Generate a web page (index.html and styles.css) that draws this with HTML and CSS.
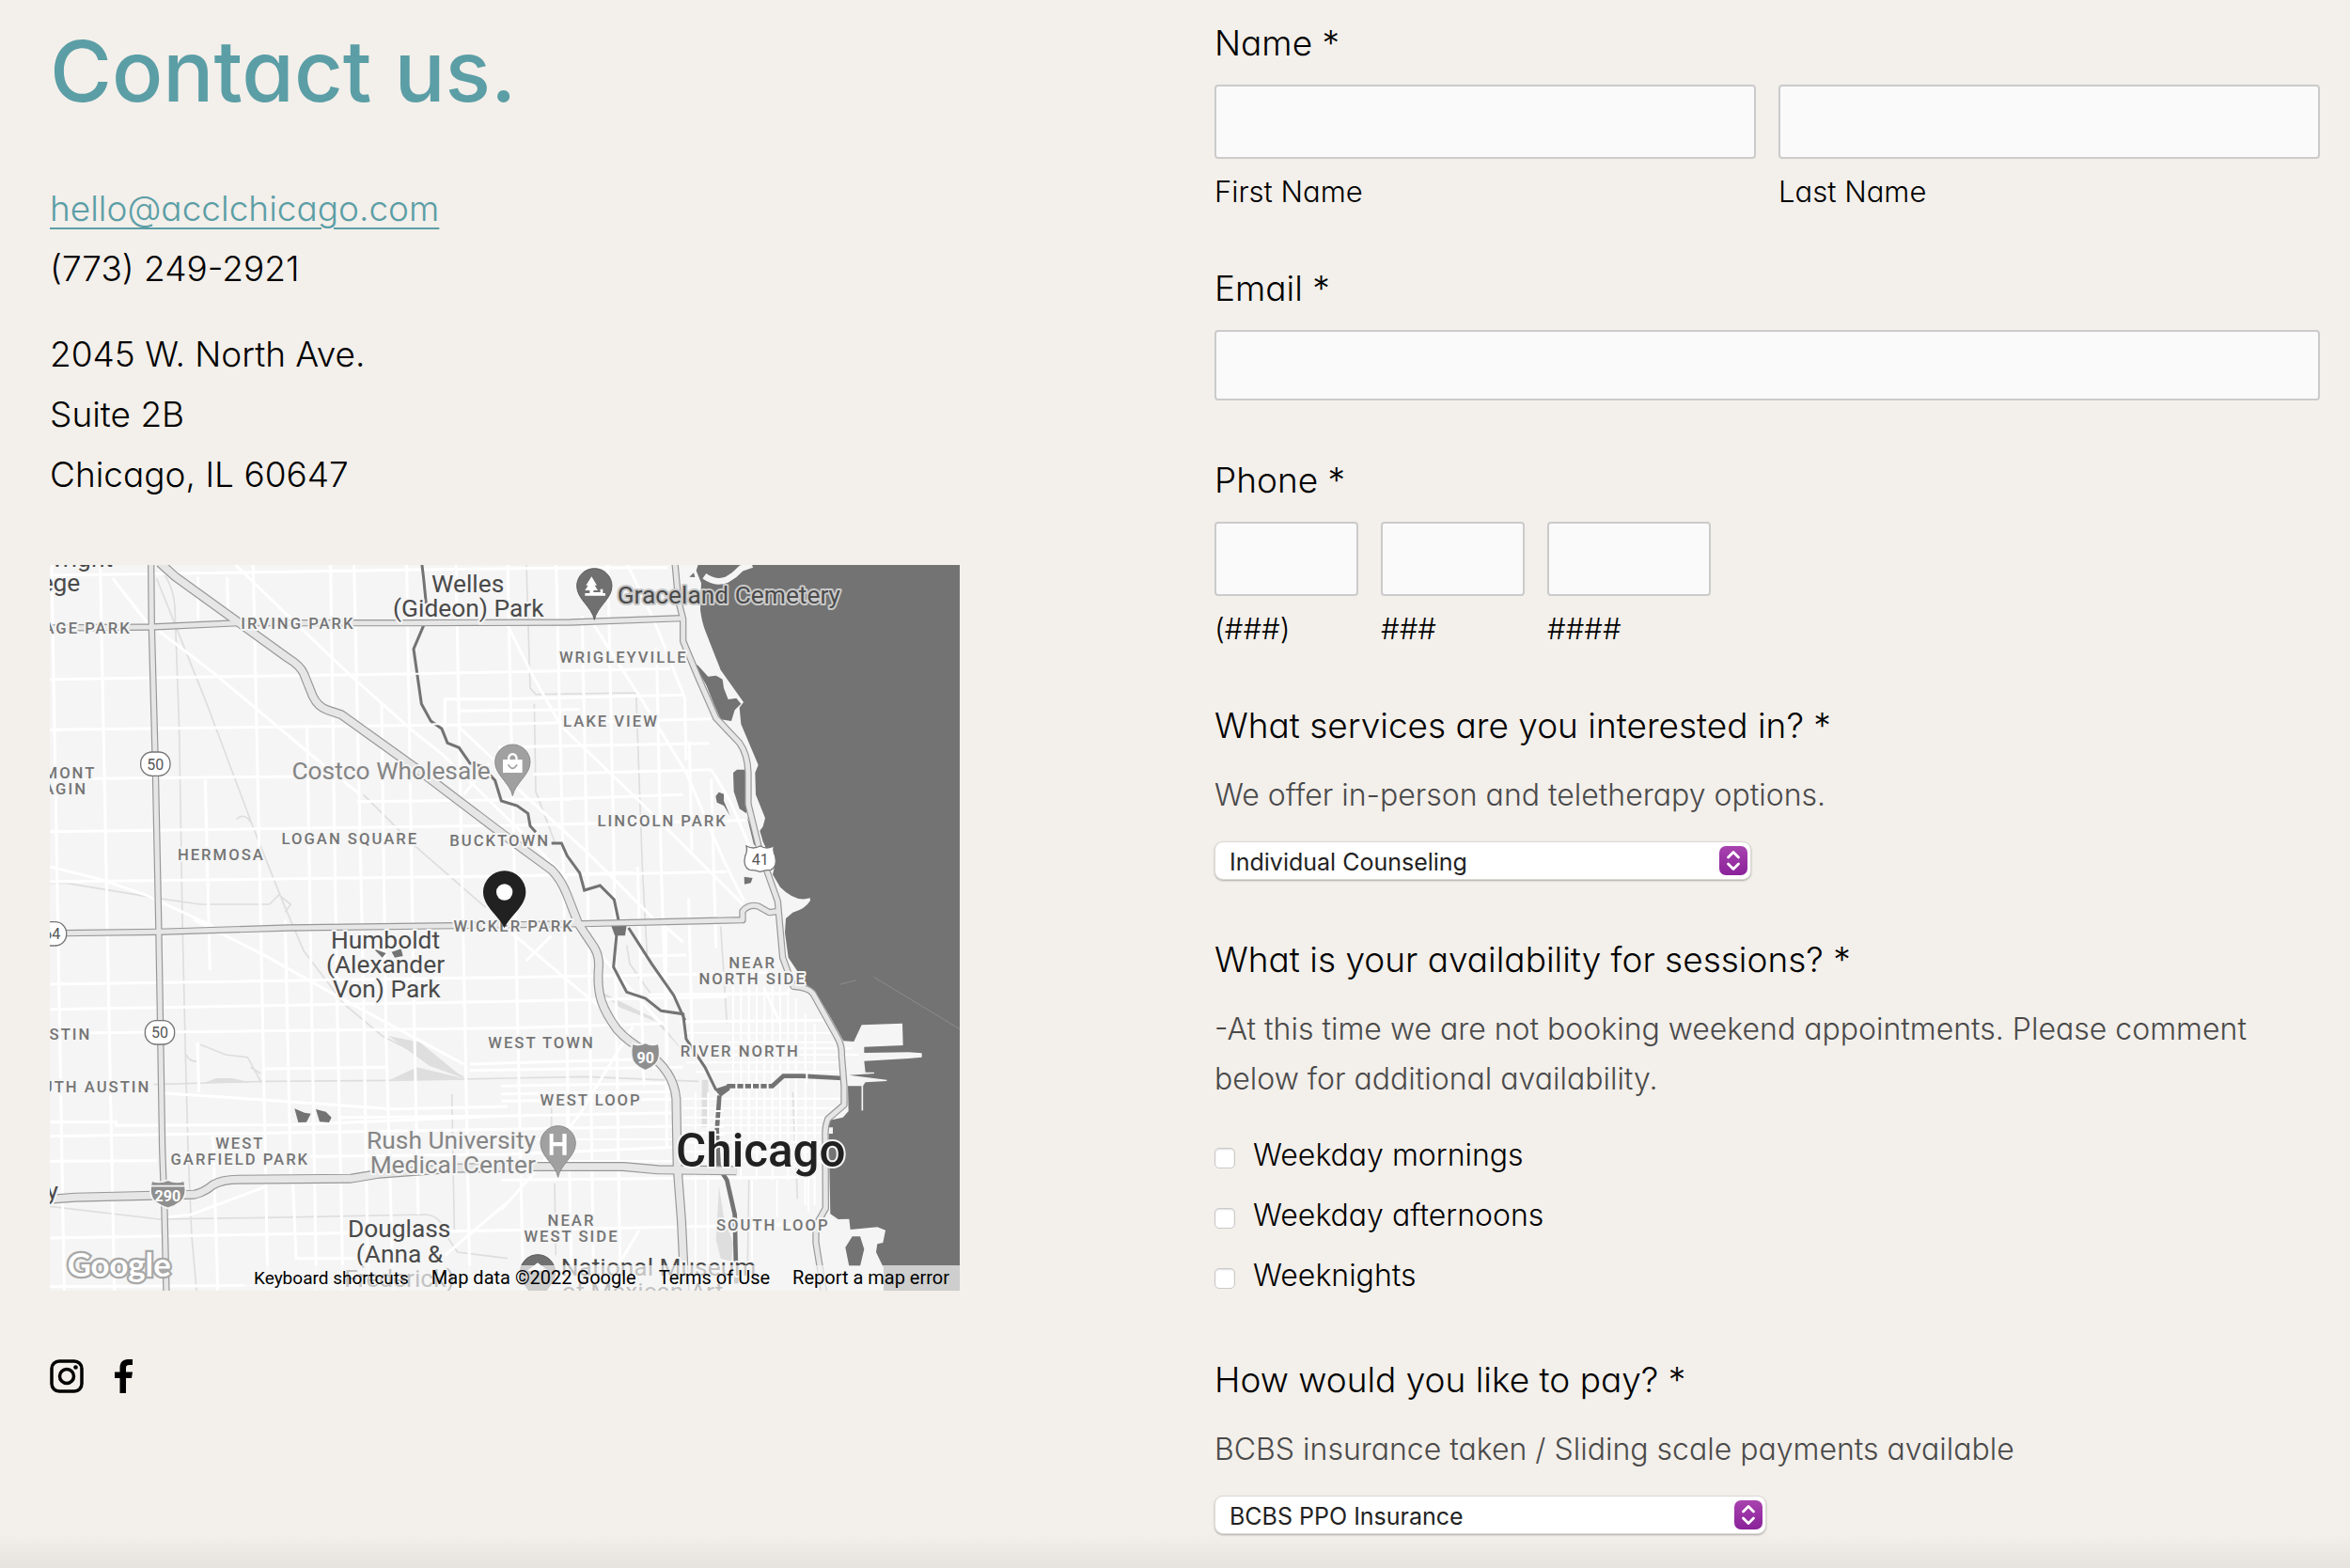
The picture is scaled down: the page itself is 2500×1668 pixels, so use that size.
FILE: index.html
```html
<!DOCTYPE html>
<html lang="en">
<head>
<meta charset="utf-8">
<meta name="viewport" content="width=device-width, initial-scale=1">
<title>Contact us</title>
<link rel="stylesheet" href="styles.css">
</head>
<body>
<main class="page">
  <section class="contact">
    <h1 class="title">Contact us.</h1>
    <div class="details">
      <p><a class="mail" href="mailto:hello@acclchicago.com">hello@acclchicago.com</a><br>(773) 249-2921</p>
      <p>2045 W. North Ave.<br>Suite 2B<br>Chicago, IL 60647</p>
    </div>

    <div class="map">
      <svg class="map-art" viewBox="39 37 2904 2316" role="img" aria-label="Map of Chicago">
        <defs>
          <path id="pin" d="M0 164C-8 122-56 98-56 56A56 56 0 0 1 56 56C56 98 8 122 0 164Z"/>
          <path id="interstate" d="M-52 2Q-26 12 0 0Q26 12 52 2Q64 50 40 70Q22 84 0 90Q-22 84-40 70Q-64 50-52 2Z"/>
          <path id="kennedy" d="M390 30L440 75L630 212L800 335Q838 358 850 385L878 455Q895 490 925 500L970 515L1200 680L1490 900L1640 1010Q1670 1040 1690 1090L1725 1180L1778 1260Q1795 1290 1790 1330C1785 1410 1802 1455 1850 1520Q1880 1555 1940 1590Q2030 1650 2038 1740L2042 1960L2055 2130L2066 2360"/>
          <path id="cicero" d="M362 30L364 235L375 640L386 1170L390 1400L398 1900L405 2100L411 2360"/>
          <path id="irving" d="M30 238L364 235L640 222L1180 222L1700 220L2055 207"/>
          <path id="north" d="M80 1212L386 1208L800 1195L1330 1188L1740 1182L2250 1170V1142Q2270 1118 2300 1126L2335 1146L2365 1142"/>
          <path id="shore" d="M2034 30L2045 150L2060 210V280L2110 400L2165 525L2240 605Q2266 640 2268 700V800L2300 930L2330 1020L2362 1110L2370 1200L2378 1290L2412 1382Q2460 1385 2475 1405L2550 1540Q2568 1570 2566 1600L2574 1700V1760L2522 1805Q2512 1830 2514 1860L2515 2090L2484 2145V2200L2510 2360"/>
          <path id="ike" d="M30 2062L120 2055L500 2046Q530 2040 560 2015Q590 1998 640 1998L1000 1995L1090 1980L1330 1962L1600 1957L1870 1957L1980 1967L2230 1970"/>
        </defs>
        <rect class="land" x="30" y="30" width="2920" height="2330"/>

        <g class="rail">
          <path d="M400 60Q435 110 438 170L452 560L462 1170L472 1600L480 1900L492 2180L508 2360M380 80L540 480L690 880L790 1130L850 1270L980 1440L1100 1540L1360 1672M30 1052H90L380 1100L520 1120H740M370 1695L720 1685L1120 1682L1500 1675L1750 1670L2110 1685M30 2083L390 2125L720 2120L1240 2110Q1290 2115 1300 2170L1340 2230L1500 2250M1040 770L1200 930L1430 1130M1560 37L1572 430L1590 450L1910 445L1930 1000L1945 1280M1585 480L1590 760L1650 920M1322 1725L1330 2160M1880 1250L1890 1310L1960 1410M2180 1190L2200 1500M2410 1720L2425 2060M2270 2000L2265 2340M475 1600Q480 1620 510 1622M520 1568L600 1600L670 1608L715 1690M1640 1770V1840M1650 2010L1654 2240M635 848Q660 825 682 860M740 1120L770 1090L808 1120L790 1145M680 1640L712 1660"/>
          <path d="M1120 1540L1220 1560L1360 1675L1250 1635ZM1125 1680L1210 1640L1360 1676ZM2175 2020L2190 2120L2220 2200L2215 2260L2180 2250L2165 2190ZM2120 1680V1830H2140V1680ZM1780 1390L1860 1450L1990 1500L2070 1600L1960 1480ZM530 1690L570 1675H620L680 1688Z" class="yard"/>
        </g>

        <g class="street">
          <path d="M45 37L85 2352M200 37L245 2352M512 75V210M605 75L608 200M688 37L712 1170L735 2352M535 720L550 1330M860 550L872 1290L890 2352M935 37L955 1400L975 2352M1010 37L1040 1400L1055 2352M1098 480L1112 1540L1135 2352M1178 37L1200 1400L1215 2110M1335 37L1362 1400L1380 2352M1500 37L1530 1400L1550 2352M1655 37L1680 1100L1705 2352M1738 200L1760 1300L1775 2352M1820 37L1838 900L1860 2352M1975 300L1990 1000L2010 1600M2080 600L2088 950M2150 720L2165 1260M1915 1000L1935 1700M2005 1200L2008 1900M2078 1100L2090 1600M790 1170L808 2000M560 1860L575 2352M510 1560L515 1720M815 2010L825 2250"/>
          <path d="M40 70L700 60L1500 48L2010 45M40 402L1210 384L2020 368M40 563L1500 545L2150 528M40 720L830 712M40 888L1500 868L2260 852M40 1048L1500 1030L2200 1016M40 1375L1500 1353L2340 1338M40 1455L1500 1430L2200 1415M40 1532L1500 1515L2000 1500M40 1815L250 1815V1826L800 1824L1500 1795L2040 1785M40 1860L1500 1838L2040 1828M40 1940L380 1938M870 1925L1500 1918L2040 1895M40 2185L1500 2160L2500 2140M40 2340L1500 2332M1470 465L2060 452M1345 503L1730 498M1470 618L2145 606M1580 705L2150 690M1580 786L2060 770M1020 792L1700 785M1690 1025L1900 1018M1920 1285L2070 1282M400 1722L880 1755L1130 1773L1500 1765M725 1645L1120 1640M1380 1630L1900 1615M1380 1650L2060 1640M960 1800L1500 1795M1480 2000L2480 1990M1950 1408L2400 1405M2050 1495L2540 1490"/>
          <path d="M240 80L345 215L560 380L870 640L1030 770M625 30L800 200L1010 400L1190 560L1290 640L1560 905L1690 1040M1500 230L1580 390L1670 550L1920 790L2160 1030L2250 1120M1770 220L1930 470L2070 700L2190 980L2255 1110M1880 30L1970 220L2065 460L2070 660M500 1170L720 1280L950 1410L1360 1630M1500 2070L1300 2240M1480 2095L1600 1960L1730 1790L1900 1510M400 2120L490 2110L730 2020M345 1090L560 1190M40 1000L200 1040L345 1090M1340 550L1500 700M1300 560V465H1500M1440 670L1360 770M1520 740L1760 960L1910 1110L1980 1180M1500 1200L1700 1370L1860 1500M1990 1180L2060 1240M1560 1300L1640 1220M820 2250H1130M1480 1700L2040 1690M1480 1725L2040 1718M1480 1748L2040 1742M2150 690L2210 790L2270 930M1860 2260L1920 2160M2320 1390L2370 1500M1740 1215L1900 1400L1990 1500"/>
        </g>
        <g class="street downtown">
          <path d="M2220 1380V1960M2245 1380V2000M2270 1380V1960M2295 1380V2000M2320 1380V1960M2345 1380V2000M2370 1380V1960M2395 1390V2000M2420 1420V1960M2450 1470V2080M2480 1500V2080M2100 1720V2300M2140 1720V2340M2280 2000V2330M2360 2000V2120M2460 1990V2100"/>
          <path d="M2070 1530H2540M2200 1560H2560M2070 1580H2600M2200 1600H2620M2070 1625H2560M2100 1655H2560M2060 1740H2570M2060 1770H2570M2060 1800H2540M2060 1825H2510M2060 1850H2510M2060 1880H2510M2060 1910H2510M2060 1940H2510M1690 1720V1960M1520 1870H2030M1520 1940H2030"/>
        </g>

        <path class="water" d="M2110 30L2102 55L2118 95L2115 180Q2120 220 2132 250L2180 372L2253 475L2240 492L2245 545L2300 675L2290 700L2292 770L2322 845L2315 872L2305 885L2315 920L2352 1000L2346 1025L2370 1065Q2420 1115 2465 1100L2466 1108Q2450 1135 2410 1146L2388 1165L2385 1210L2396 1290L2455 1378L2480 1395L2530 1480L2572 1556L2605 1558L2630 1505L2760 1500L2762 1570L2638 1575V1594L2780 1592L2822 1595V1608L2780 1612L2638 1620L2642 1656H2670V1660L2590 1665L2710 1680V1684L2642 1688L2634 1700H2586L2588 1780L2570 1800L2525 1810V1832H2538V1852H2525L2530 2108L2555 2125L2590 2124L2594 2158L2680 2150L2706 2160L2698 2200L2680 2204L2676 2230L2700 2280V2360H2950V30Z"/>
        <g class="water">
          <path d="M2105 355L2140 393L2165 390L2186 402L2190 430L2204 466L2230 462L2245 480L2225 500L2214 535L2180 530L2158 480L2134 420L2100 362ZM2220 700L2232 690H2262V830L2240 815L2222 760ZM2164 775L2174 762L2190 768L2190 790L2210 838L2190 805L2168 795ZM2255 1032L2282 1036L2276 1052L2256 1056ZM2264 840L2300 930L2286 930ZM2080 75L2094 62L2098 76ZM2600 2180H2625L2638 2220L2625 2275H2590L2578 2215Z"/>
          <path d="M820 1772L852 1785L872 1788L858 1815L832 1816ZM888 1774L920 1782L938 1800L930 1816L900 1814ZM1130 1272L1160 1262L1166 1285L1140 1290ZM1072 1262L1112 1276L1100 1290ZM1830 1186H1880L1875 1220H1842ZM2160 1710L2205 1695L2210 1712L2180 1734Z"/>
        </g>
        <g class="spit">
          <path d="M2128 72Q2165 98 2200 84Q2225 70 2245 48L2280 36"/>
          <path d="M2632 1690V1778" class="thin"/><path d="M2668 1352L2943 1518M2560 1376L2612 1362" class="hair"/>
        </g>
        <g class="river">
          <path d="M1226 30L1232 80L1240 160M1232 230L1200 305L1225 480L1255 535L1290 560L1308 605L1345 620L1380 670L1420 680L1460 725L1480 790L1530 805L1565 830L1572 870L1590 890M1640 925L1672 925L1690 965L1730 1020L1745 1075L1795 1060L1840 1105L1858 1190"/>
          <path d="M1848 1215L1838 1320L1880 1400L1940 1420L1990 1460L2060 1470L2070 1550L2130 1640L2165 1712M1886 1195L1960 1310L2030 1410L2066 1490"/>
          <path d="M2200 1700H2345L2380 1668H2440L2570 1675M2176 1730L2168 1840L2174 1960L2200 2000L2225 2110L2230 2330" class="wide"/>
        </g>
        <path class="bridges" d="M2230 1690V1712M2255 1690V1712M2280 1690V1712M2305 1690V1712M2330 1690V1712M2455 1650V1690M2160 1780H2190M2160 1805H2190M2160 1830H2190M2160 1855H2190M2160 1880H2190M1205 384H1222M1260 545H1300"/>

        <g class="casing">
          <use href="#irving"/><use href="#north"/><use href="#cicero"/><use href="#shore"/><use href="#ike" class="major"/><use href="#kennedy" class="major"/>
        </g>
        <g class="road">
          <use href="#irving"/><use href="#north"/><use href="#cicero"/><use href="#shore"/><use href="#ike" class="major"/><use href="#kennedy" class="major"/>
        </g>

        <g class="shield">
          <rect x="329" y="634" width="94" height="76" rx="36"/><text x="376" y="690">50</text>
          <rect x="343" y="1491" width="94" height="76" rx="36"/><text x="390" y="1546">50</text>
          <rect x="-4" y="1176" width="96" height="76" rx="36"/><text x="46" y="1231">64</text>
          <path d="M2262 934Q2284 946 2306 934Q2328 946 2350 934Q2346 950 2354 966Q2362 1000 2340 1010Q2322 1010 2306 1016Q2290 1010 2272 1010Q2250 1000 2258 966Q2266 950 2262 934Z"/><text x="2306" y="993">41</text>
        </g>
        <g class="interstate">
          <use href="#interstate" x="416" y="2000"/><path d="M360 2019H472M1890 1578H1990"/><text x="415" y="2069">290</text>
          <use href="#interstate" transform="translate(1940 1562) scale(.8 .98)"/><text x="1940" y="1628">90</text>
        </g>

        <g class="hood">
          <text x="299" y="257" text-anchor="end">PORTAGE PARK</text>
          <text x="831" y="241">IRVING PARK</text>
          <text x="1870" y="348">WRIGLEYVILLE</text>
          <text x="1830" y="553">LAKE VIEW</text>
          <text x="1994" y="872">LINCOLN PARK</text>
          <text x="1475" y="935">BUCKTOWN</text>
          <text x="997" y="927">LOGAN SQUARE</text>
          <text x="586" y="980">HERMOSA</text>
          <text x="187" y="717" text-anchor="end">BELMONT</text>
          <text x="159" y="770" text-anchor="end">CRAGIN</text>
          <text x="1520" y="1208">WICKER PARK</text>
          <text x="172" y="1552" text-anchor="end">AUSTIN</text>
          <text x="361" y="1720" text-anchor="end">SOUTH AUSTIN</text>
          <text x="646" y="1900">WEST</text><text x="646" y="1952">GARFIELD PARK</text>
          <text x="1608" y="1580">WEST TOWN</text>
          <text x="2242" y="1605">RIVER NORTH</text>
          <text x="1766" y="1762">WEST LOOP</text>
          <text x="2282" y="1325">NEAR</text><text x="2282" y="1376">NORTH SIDE</text>
          <text x="1704" y="2146">NEAR</text><text x="1704" y="2197">WEST SIDE</text>
          <text x="2347" y="2161">SOUTH LOOP</text>
        </g>
        <g class="place">
          <text x="240" y="43" text-anchor="end">Wright</text>
          <text x="136" y="122" text-anchor="end">College</text>
          <text x="1373" y="125">Welles</text><text x="1375" y="203">(Gideon) Park</text>
          <text x="1850" y="160" text-anchor="start" class="over-water">Graceland Cemetery</text>
          <text x="1110" y="1260">Humboldt</text><text x="1110" y="1338">(Alexander</text><text x="1114" y="1416">Von) Park</text>
          <text x="1154" y="2182">Douglass</text><text x="1155" y="2262">(Anna &amp;</text><text x="1155" y="2342">Frederick)</text>
          <text x="66" y="2062" text-anchor="end">y</text>
          <text x="1670" y="2305" text-anchor="start">National Museum</text>
          <text x="1673" y="2383" text-anchor="start">of Mexican Art</text>
        </g>
        <g class="place business">
          <text x="1445" y="722" text-anchor="end">Costco Wholesale</text>
          <text x="1590" y="1900" text-anchor="end">Rush University</text>
          <text x="1590" y="1978" text-anchor="end">Medical Center</text>
        </g>
        <text class="city" x="2308" y="1957">Chicago</text>

        <g class="poi">
          <use href="#pin" x="1777" y="48" class="dark"/>
          <path class="glyph" d="M1768 74L1750 102H1757L1747 118H1762V127H1747V135H1812V127H1804V114H1796V124H1774V118H1788L1778 102H1785Z"/>
          <use href="#pin" x="1516" y="610"/>
          <path class="glyph" d="M1485 658H1500V652Q1502 638 1516 637Q1530 638 1532 652V658H1547V700H1485ZM1507 658H1525V652Q1523 644 1516 644Q1509 644 1507 652Z" fill-rule="evenodd"/>
          <path class="smile" d="M1502 674Q1516 698 1530 674"/>
          <use href="#pin" x="1661" y="1827"/>
          <path class="glyph" d="M1634 1852H1646V1879H1675V1852H1688V1920H1675V1892H1646V1920H1634Z"/>
          <use href="#pin" x="1596" y="2238" class="dark"/>
          <path class="glyph" d="M1596 2264L1630 2290H1562Z"/>
        </g>
        <path class="marker" d="M1490 1196C1476 1160 1422 1128 1422 1081A68 68 0 0 1 1558 1081C1558 1128 1504 1160 1490 1196Z"/>
        <circle cx="1490" cy="1081" r="26" fill="#fff"/>
        <text class="logo" x="95" y="2307">Google</text>
      </svg>
      <div class="map-bar">
        <button class="keys" type="button">Keyboard shortcuts</button>
        <span>Map data ©2022 Google</span>
        <a href="#terms">Terms of Use</a>
        <a href="#report">Report a map error</a>
      </div>
    </div>

    <nav class="social" aria-label="Social media">
      <a href="#instagram" aria-label="Instagram">
        <svg width="36" height="36" viewBox="0 0 36 36"><rect x="2" y="2" width="32" height="32" rx="8" fill="none" stroke="#000" stroke-width="3.500"/><circle cx="18" cy="18" r="7.500" fill="none" stroke="#000" stroke-width="3.500"/><circle cx="27.500" cy="8.500" r="2.300"/></svg>
      </a>
      <a href="#facebook" aria-label="Facebook">
        <svg width="19" height="36" viewBox="0 0 19 36"><path d="M5.500 36V20H0V13.500H5.500V9.500C5.500 3.500 8.500 0 14 0H19V6H15.500C13 6 12 7 12 9V13.500H19L18 20H12V36Z"/></svg>
      </a>
    </nav>
  </section>

  <form class="form">
    <fieldset class="field">
      <legend class="label">Name *</legend>
      <div class="names">
        <div class="part"><input class="box" type="text" id="first"><label class="caption" for="first">First Name</label></div>
        <div class="part"><input class="box" type="text" id="last"><label class="caption" for="last">Last Name</label></div>
      </div>
    </fieldset>
    <div class="field">
      <label class="label" for="email">Email *</label>
      <input class="box email" type="email" id="email">
    </div>
    <fieldset class="field">
      <legend class="label">Phone *</legend>
      <div class="phones">
        <div class="part area"><input class="box" type="tel" id="area"><label class="caption" for="area">(###)</label></div>
        <div class="part area"><input class="box" type="tel" id="prefix"><label class="caption" for="prefix">###</label></div>
        <div class="part line"><input class="box" type="tel" id="line"><label class="caption" for="line">####</label></div>
      </div>
    </fieldset>
    <div class="field">
      <label class="label" for="service">What services are you interested in? *</label>
      <p class="hint">We offer in-person and teletherapy options.</p>
      <div class="picker">
        <select id="service"><option>Individual Counseling</option></select>
        <svg class="stepper" width="30" height="31" viewBox="0 0 30 31"><rect width="30" height="31" rx="7" fill="url(#purple)"/><defs><linearGradient id="purple" x2="0" y2="1"><stop stop-color="#a843ae"/><stop offset="1" stop-color="#8a219a"/></linearGradient></defs><path d="M9.500 12L15 6.500L20.500 12M9.500 19L15 24.500L20.500 19" fill="none" stroke="#fff" stroke-width="2.800" stroke-linecap="round" stroke-linejoin="round"/></svg>
      </div>
    </div>
    <fieldset class="field">
      <legend class="label">What is your availability for sessions? *</legend>
      <p class="hint">-At this time we are not booking weekend appointments. Please comment below for additional availability.</p>
      <div class="options">
        <label class="option"><input type="checkbox">Weekday mornings</label>
        <label class="option"><input type="checkbox">Weekday afternoons</label>
        <label class="option"><input type="checkbox">Weeknights</label>
      </div>
    </fieldset>
    <div class="field">
      <label class="label" for="payment">How would you like to pay? *</label>
      <p class="hint">BCBS insurance taken / Sliding scale payments available</p>
      <div class="picker payment">
        <select id="payment"><option>BCBS PPO Insurance</option></select>
        <svg class="stepper" width="30" height="31" viewBox="0 0 30 31"><rect width="30" height="31" rx="7" fill="url(#purple)"/><path d="M9.500 12L15 6.500L20.500 12M9.500 19L15 24.500L20.500 19" fill="none" stroke="#fff" stroke-width="2.800" stroke-linecap="round" stroke-linejoin="round"/></svg>
      </div>
    </div>
  </form>
</main>
</body>
</html>
```
FILE: styles.css
```css
* { box-sizing: border-box; }

body {
  margin: 0;
  min-height: 100vh;
  background: linear-gradient(#f3efea, #e6e2dd) bottom / 100% 36px no-repeat #f3efea;
  color: #000;
  font-family: Inter, "Liberation Sans", sans-serif;
  font-feature-settings: "cv11";
  font-size: 37px;
  font-weight: 300;
  line-height: 64px;
}

p, h1 { margin: 0; }

.page {
  display: grid;
  grid-template-columns: 968fr 1176fr;
  column-gap: 271px;
  padding: 14px 32px 32px 53px;
}

/* Contact details */
.contact { padding-top: 8px; }
.title {
  color: #5b9ea6;
  font-size: 90px;
  font-weight: 500;
  line-height: 108px;
}
.details {
  display: grid;
  gap: 27px;
  margin-top: 60px;
}
.mail {
  color: #5b9ea6;
  text-decoration-thickness: 2px;
  text-underline-offset: 7px;
}

/* Map */
.map {
  position: relative;
  margin-top: 64px;
  font-family: Roboto, sans-serif;
  font-weight: 400;
}
.map-art { display: block; width: 100%; height: auto; }
.land { fill: #f5f5f5; }
.rail { fill: none; stroke: #dedede; stroke-width: 5; }
.yard { fill: #dedede; stroke: none; }
.street { fill: none; stroke: #fff; stroke-width: 9; }
.downtown { stroke-width: 6; }
.water { fill: #737373; }
.spit { fill: none; stroke: #f5f5f5; stroke-width: 20; }
.thin { stroke-width: 5; }
.hair { stroke: #999; stroke-width: 2; }
.river { fill: none; stroke: #737373; stroke-width: 9; }
.wide { stroke-width: 14; }
.bridges { fill: none; stroke: #fff; stroke-width: 6; }
.casing, .road { fill: none; stroke-linejoin: round; }
.casing { stroke: #979797; stroke-width: 22; }
.road { stroke: #e6e6e6; stroke-width: 15; }
.casing .major { stroke-width: 30; }
.road .major { stroke-width: 23; }
.shield { fill: #fff; stroke: #757575; stroke-width: 4; }
.shield text { fill: #555; stroke: none; font-size: 48px; text-anchor: middle; }
.interstate { fill: #8f8f8f; stroke: #f5f5f5; stroke-width: 5; }
.interstate text { fill: #fff; stroke: none; font-size: 48px; font-weight: 700; text-anchor: middle; }
.hood, .place, .city { paint-order: stroke; stroke: #f5f5f5; stroke-width: 12; stroke-linejoin: round; }
.hood { fill: #757575; font-size: 50px; font-weight: 500; letter-spacing: 6px; text-anchor: middle; }
.place { fill: #4a4a4a; font-size: 79px; text-anchor: middle; }
.over-water { stroke: #c9c9c9; }
.business { fill: #858585; }
.city { fill: #212121; font-size: 148px; font-weight: 500; text-anchor: middle; }
.poi { fill: #a0a0a0; stroke: #8c8c8c; stroke-width: 3; }
.poi .dark { fill: #707070; stroke: #5c5c5c; }
.poi .glyph { fill: #fff; stroke: none; }
.smile { fill: none; stroke: #a0a0a0; stroke-width: 5; }
.marker { fill: #212121; }
.logo {
  paint-order: stroke;
  fill: #fff;
  stroke: #a8a8a8;
  stroke-width: 14;
  font-family: Lato, sans-serif;
  font-size: 104px;
  font-weight: 700;
}
.map-bar {
  position: absolute;
  right: 0;
  bottom: 0;
  display: flex;
  gap: 24px;
  padding: 0 11px 0 10px;
  background: rgba(245, 245, 245, 0.7);
  font-size: 20px;
  line-height: 27px;
}
.map-bar button, .map-bar a {
  padding: 0;
  border: 0;
  background: none;
  color: #000;
  font: inherit;
  text-decoration: none;
}
.map-bar .keys { font-size: 19px; }

.social { display: flex; gap: 33px; margin-top: 73px; }
.social svg { display: block; }

/* Form */
.form { display: grid; gap: 53px; align-content: start; }
.field { min-width: 0; margin: 0; padding: 0; border: 0; }
div.field { display: flex; flex-direction: column; }
.label { display: block; padding: 0; margin-bottom: 12px; }
.names { display: grid; grid-template-columns: 1fr 1fr; gap: 24px; }
.phones { display: flex; gap: 24px; }
.area { width: 153px; }
.line { width: 174px; }
.box {
  display: block;
  width: 100%;
  height: 79px;
  padding: 0 20px;
  border: 2px solid #cbcbcb;
  border-radius: 4px;
  background: #fafafa;
  font: inherit;
}
.email { height: 75px; }
.caption { display: block; margin-top: 16px; font-size: 31px; line-height: 37px; }
.hint { margin-top: 3px; color: #4a4a4a; font-size: 32px; line-height: 53px; }
.options { display: grid; gap: 11px; margin-top: 28px; }
.option { display: flex; align-items: center; gap: 19px; font-size: 32px; line-height: 53px; }
.option input {
  appearance: none;
  width: 22px;
  height: 22px;
  margin: 6px 0 0;
  border: 1px solid #c9c9c9;
  border-radius: 5px;
  background: #fff;
  box-shadow: inset 0 1px 2px #ddd;
}
.picker { position: relative; width: 571px; margin-top: 23px; }
.payment { width: 587px; }
.picker select {
  appearance: none;
  display: block;
  width: 100%;
  height: 41px;
  padding: 2px 48px 0 15px;
  border: 1px solid #dcd9d5;
  border-radius: 9px;
  background: #fff;
  box-shadow: 0 1px 2px #aaa;
  color: #222;
  font: 400 25px/36px Inter, sans-serif;
}
.stepper { position: absolute; top: 5px; right: 4px; pointer-events: none; }
```
